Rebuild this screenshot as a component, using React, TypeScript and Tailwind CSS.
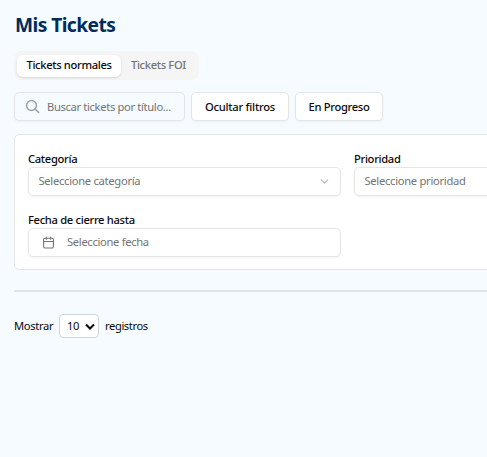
import type { ReactNode } from 'react';
import { Calendar, ChevronDown } from 'lucide-react';

const SearchIcon = () => (
  <svg
    className="size-[15px] text-[#99a1af]"
    viewBox="0 0 15 15"
    fill="none"
    stroke="currentColor"
    strokeWidth={1.5}
  >
    <circle cx="6.5" cy="6.5" r="4.9" />
    <path d="M10 10l3.6 3.4" strokeLinecap="round" />
  </svg>
);

const Field = ({ label, children }: { label: string; children: ReactNode }) => (
  <div className="flex flex-col">
    <label className="h-[18px] whitespace-nowrap pt-px font-medium leading-[18px] tracking-[-0.32px]">
      {label}
    </label>
    {children}
  </div>
);

const SelectTrigger = ({ placeholder }: { placeholder: string }) => (
  <button className="flex h-[29px] items-center justify-between rounded-[5px] border border-[#e5e5e5] pl-[9.5px] pr-[9px] text-[#737373] shadow-xs">
    <span className="whitespace-nowrap tracking-[-0.29px]">{placeholder}</span>
    <ChevronDown className="size-[13px] opacity-50" />
  </button>
);

export default function App() {
  return (
    <main className="min-h-screen overflow-hidden bg-[#f6fbff] pl-[14px] font-['Noto_Sans','Open_Sans',sans-serif] text-[11.2px] text-[#0a0a0a]">
      <h1 className="pl-px pt-3 text-[19.2px] font-bold leading-[26px] tracking-[-0.57px] text-[#002b5b]">
        Mis Tickets
      </h1>

      <div className="mt-[13px] flex h-[29px] w-[185px] items-center rounded-lg bg-[#f5f5f5] p-[3px] font-medium tracking-[-0.34px]">
        <button className="h-[22px] w-[104px] whitespace-nowrap rounded-md bg-white shadow-sm">
          Tickets normales
        </button>
        <button className="h-[22px] w-[75px] whitespace-nowrap text-[#737373]">Tickets FOI</button>
      </div>

      <div className="mt-3 flex gap-[6px]">
        <div className="flex h-[29px] w-[171px] items-center rounded-[5px] border border-[#e5e5e5] pl-[10px] shadow-xs">
          <SearchIcon />
          <span className="ml-[7px] whitespace-nowrap pt-px tracking-[-0.34px] text-[#737373]">
            Buscar tickets por título...
          </span>
        </div>
        <button className="h-[29px] w-[98px] whitespace-nowrap rounded-[5px] border border-[#e5e5e5] bg-white pt-px font-medium tracking-[-0.26px] shadow-xs">
          Ocultar filtros
        </button>
        <button className="h-[29px] w-[88px] whitespace-nowrap rounded-[5px] border border-[#e5e5e5] bg-white pt-px font-medium tracking-[-0.32px] shadow-xs">
          En Progreso
        </button>
      </div>

      <section className="mt-[13px] grid h-[136px] w-[667px] grid-cols-[313px_313px] content-start gap-x-[13px] gap-y-[14px] rounded-[5px] border border-[#e5e5e5] bg-white px-[13px] pt-[14px]">
        <Field label="Categoría">
          <SelectTrigger placeholder="Seleccione categoría" />
        </Field>
        <Field label="Prioridad">
          <SelectTrigger placeholder="Seleccione prioridad" />
        </Field>
        <Field label="Fecha de cierre hasta">
          <button className="flex h-[29px] items-center rounded-[5px] border border-[#e5e5e5] pl-[13px] text-[#737373] shadow-xs">
            <Calendar className="size-[13px]" />
            <span className="ml-3 whitespace-nowrap tracking-[-0.32px]">Seleccione fecha</span>
          </button>
        </Field>
      </section>

      <div className="mt-5 h-[2px] w-[667px] bg-[#e1e4e6]" />

      <div className="mt-[22px] flex items-center">
        <span className="w-[45px] tracking-[-0.35px]">Mostrar</span>
        <div className="flex h-6 w-10 items-center justify-between rounded-[4px] border border-[#d1d5dc] bg-white pl-[7px] pr-[3px]">
          <span className="pt-px tracking-[-0.4px]">10</span>
          <svg
            className="h-[7px] w-[10px]"
            viewBox="0 0 10 7"
            fill="none"
            stroke="currentColor"
            strokeWidth={2}
          >
            <path d="M1 1.5l4 4 4-4" />
          </svg>
        </div>
        <span className="ml-[6px] tracking-[-0.4px]">registros</span>
      </div>
    </main>
  );
}
